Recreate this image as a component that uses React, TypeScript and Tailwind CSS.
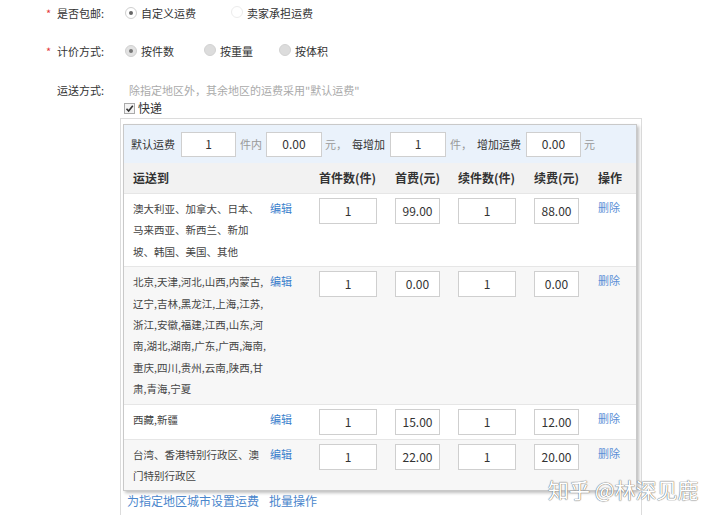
import React from "react";

const FONT = { fontFamily: '"Noto Sans CJK SC", "Liberation Sans", sans-serif' };

function Radio({ kind }: { kind: "on" | "off" | "disabled" | "onDisabled" }) {
  if (kind === "on")
    return (
      <span className="inline-flex h-[12px] w-[12px] items-center justify-center rounded-full border border-[#cfcfcf] bg-white">
        <span className="h-[4px] w-[4px] rounded-full bg-[#666]" />
      </span>
    );
  if (kind === "onDisabled")
    return (
      <span className="inline-flex h-[12px] w-[12px] items-center justify-center rounded-full border border-[#d0d0d0] bg-[#e2e2e2]">
        <span className="h-[4px] w-[4px] rounded-full bg-[#777]" />
      </span>
    );
  if (kind === "disabled")
    return <span className="inline-block h-[12px] w-[12px] rounded-full border border-[#d2d2d2] bg-[#dcdcdc]" />;
  return <span className="inline-block h-[12px] w-[12px] rounded-full border border-[#ececec] bg-white" />;
}

function Box({ v, w, h = 25 }: { v: string; w: number; h?: number }) {
  return (
    <div
      className="flex shrink-0 items-center justify-center border border-[#cfcfcf] bg-white text-[12px] text-[#333]"
      style={{ width: w, height: h }}
    >
      {v}
    </div>
  );
}

type Row = { lines: string[]; a: string; b: string; c: string; d: string; bg: string };

const rows: Row[] = [
  {
    lines: ["澳大利亚、加拿大、日本、", "马来西亚、新西兰、新加", "坡、韩国、美国、其他"],
    a: "1",
    b: "99.00",
    c: "1",
    d: "88.00",
    bg: "bg-white",
  },
  {
    lines: [
      "北京,天津,河北,山西,内蒙古,",
      "辽宁,吉林,黑龙江,上海,江苏,",
      "浙江,安徽,福建,江西,山东,河",
      "南,湖北,湖南,广东,广西,海南,",
      "重庆,四川,贵州,云南,陕西,甘",
      "肃,青海,宁夏",
    ],
    a: "1",
    b: "0.00",
    c: "1",
    d: "0.00",
    bg: "bg-[#f7f7f7]",
  },
  { lines: ["西藏,新疆"], a: "1", b: "15.00", c: "1", d: "12.00", bg: "bg-white" },
  {
    lines: ["台湾、香港特别行政区、澳", "门特别行政区"],
    a: "1",
    b: "22.00",
    c: "1",
    d: "20.00",
    bg: "bg-[#f7f7f7]",
  },
];

export default function App() {
  return (
    <div className="relative h-[515px] w-[720px] overflow-hidden bg-white text-[11px] text-[#333]" style={FONT}>
      {/* Row 1 */}
      <div className="flex h-[26px] items-center">
        <div className="flex w-[125px] items-center pl-[46px]">
          <span className="w-[11px] text-[#e4393c]">*</span>
          <span>是否包邮:</span>
        </div>
        <div className="flex items-center">
          <Radio kind="on" />
          <span className="ml-[4px]">自定义运费</span>
          <span className="ml-[35px]">
            <Radio kind="off" />
          </span>
          <span className="ml-[4px]">卖家承担运费</span>
        </div>
      </div>
      {/* Row 2 */}
      <div className="mt-[12px] flex h-[26px] items-center">
        <div className="flex w-[125px] items-center pl-[46px]">
          <span className="w-[11px] text-[#e4393c]">*</span>
          <span>计价方式:</span>
        </div>
        <div className="flex items-center">
          <Radio kind="onDisabled" />
          <span className="ml-[4px]">按件数</span>
          <span className="ml-[30px]">
            <Radio kind="disabled" />
          </span>
          <span className="ml-[4px]">按重量</span>
          <span className="ml-[26px]">
            <Radio kind="disabled" />
          </span>
          <span className="ml-[4px]">按体积</span>
        </div>
      </div>
      {/* Row 3 */}
      <div className="mt-[18px] flex h-[16px] items-center">
        <div className="w-[129px] pl-[57px]">运送方式:</div>
        <div className="text-[#aaa]">除指定地区外，其余地区的运费采用"默认运费"</div>
      </div>
      <div className="flex h-[20px] items-center pl-[124px]">
        <span className="relative inline-flex h-[11px] w-[11px] items-center justify-center border border-[#aaa] bg-[#f4f4f4]">
          <svg width="9" height="9" viewBox="0 0 9 9">
            <path d="M1.5 4.8 L3.6 7 L7.8 1.8" fill="none" stroke="#333" strokeWidth="1.6" />
          </svg>
        </span>
        <span className="ml-[3px] text-[12px]">快递</span>
      </div>

      {/* Outer box */}
      <div className="ml-[120px] h-[400px] w-[522px] border border-[#dcdcdc] pl-[2px] pr-[4px] pt-[5px]">
        <div className="border border-[#c9c9c9] bg-white shadow-[2px_2px_3px_rgba(0,0,0,0.25)]">
          {/* default row */}
          <div className="flex h-[38px] items-center bg-[#eaf2fb] pl-[7px]">
            <span>默认运费</span>
            <span className="ml-[6px]">
              <Box v="1" w={55} />
            </span>
            <span className="ml-[4px] text-[#999]">件内</span>
            <span className="ml-[4px]">
              <Box v="0.00" w={56} />
            </span>
            <span className="ml-[3px] text-[#999]">元，</span>
            <span className="ml-[5px]">每增加</span>
            <span className="ml-[5px]">
              <Box v="1" w={56} />
            </span>
            <span className="ml-[4px] text-[#999]">件，</span>
            <span className="ml-[5px]">增加运费</span>
            <span className="ml-[5px]">
              <Box v="0.00" w={55} />
            </span>
            <span className="ml-[3px] text-[#999]">元</span>
          </div>
          {/* header */}
          <div className="flex h-[30px] items-center bg-[#f2f2f2] text-[12px] font-bold text-[#333]">
            <div className="w-[195px] pl-[9px]">运送到</div>
            <div className="w-[76px]">首件数(件)</div>
            <div className="w-[63px]">首费(元)</div>
            <div className="w-[76px]">续件数(件)</div>
            <div className="w-[64px]">续费(元)</div>
            <div>操作</div>
          </div>
          {rows.map((r, i) => (
            <div key={i} className={`flex border-t border-[#e6e6e6] pb-[4px] pt-[4px] ${r.bg}`}>
              <div className="w-[146px] pl-[9px] text-[10.5px] leading-[21.4px] text-[#444]">
                {r.lines.map((l, j) => (
                  <div key={j} className="whitespace-nowrap">
                    {l}
                  </div>
                ))}
              </div>
              <div className="w-[49px] leading-[21px] text-[#3a7fcc]">编辑</div>
              <div className="w-[76px]">
                <Box v={r.a} w={58} h={26} />
              </div>
              <div className="w-[63px]">
                <Box v={r.b} w={45} h={26} />
              </div>
              <div className="w-[76px]">
                <Box v={r.c} w={58} h={26} />
              </div>
              <div className="w-[64px]">
                <Box v={r.d} w={45} h={26} />
              </div>
              <div className="leading-[19px] text-[#5b8fd6]">删除</div>
            </div>
          ))}
        </div>
        <div className="mt-[1px] flex pl-[4px] text-[12px] text-[#4a86cc]">
          <span>为指定地区城市设置运费</span>
          <span className="ml-[10px]">批量操作</span>
        </div>
      </div>

      {/* watermark */}
      <div
        className="absolute left-[548px] top-[474px] text-[21px] text-white"
        style={{ textShadow: "0 0 1px #555, 0 0 1px #777" }}
      >
        知乎 @林深见鹿
      </div>
    </div>
  );
}
